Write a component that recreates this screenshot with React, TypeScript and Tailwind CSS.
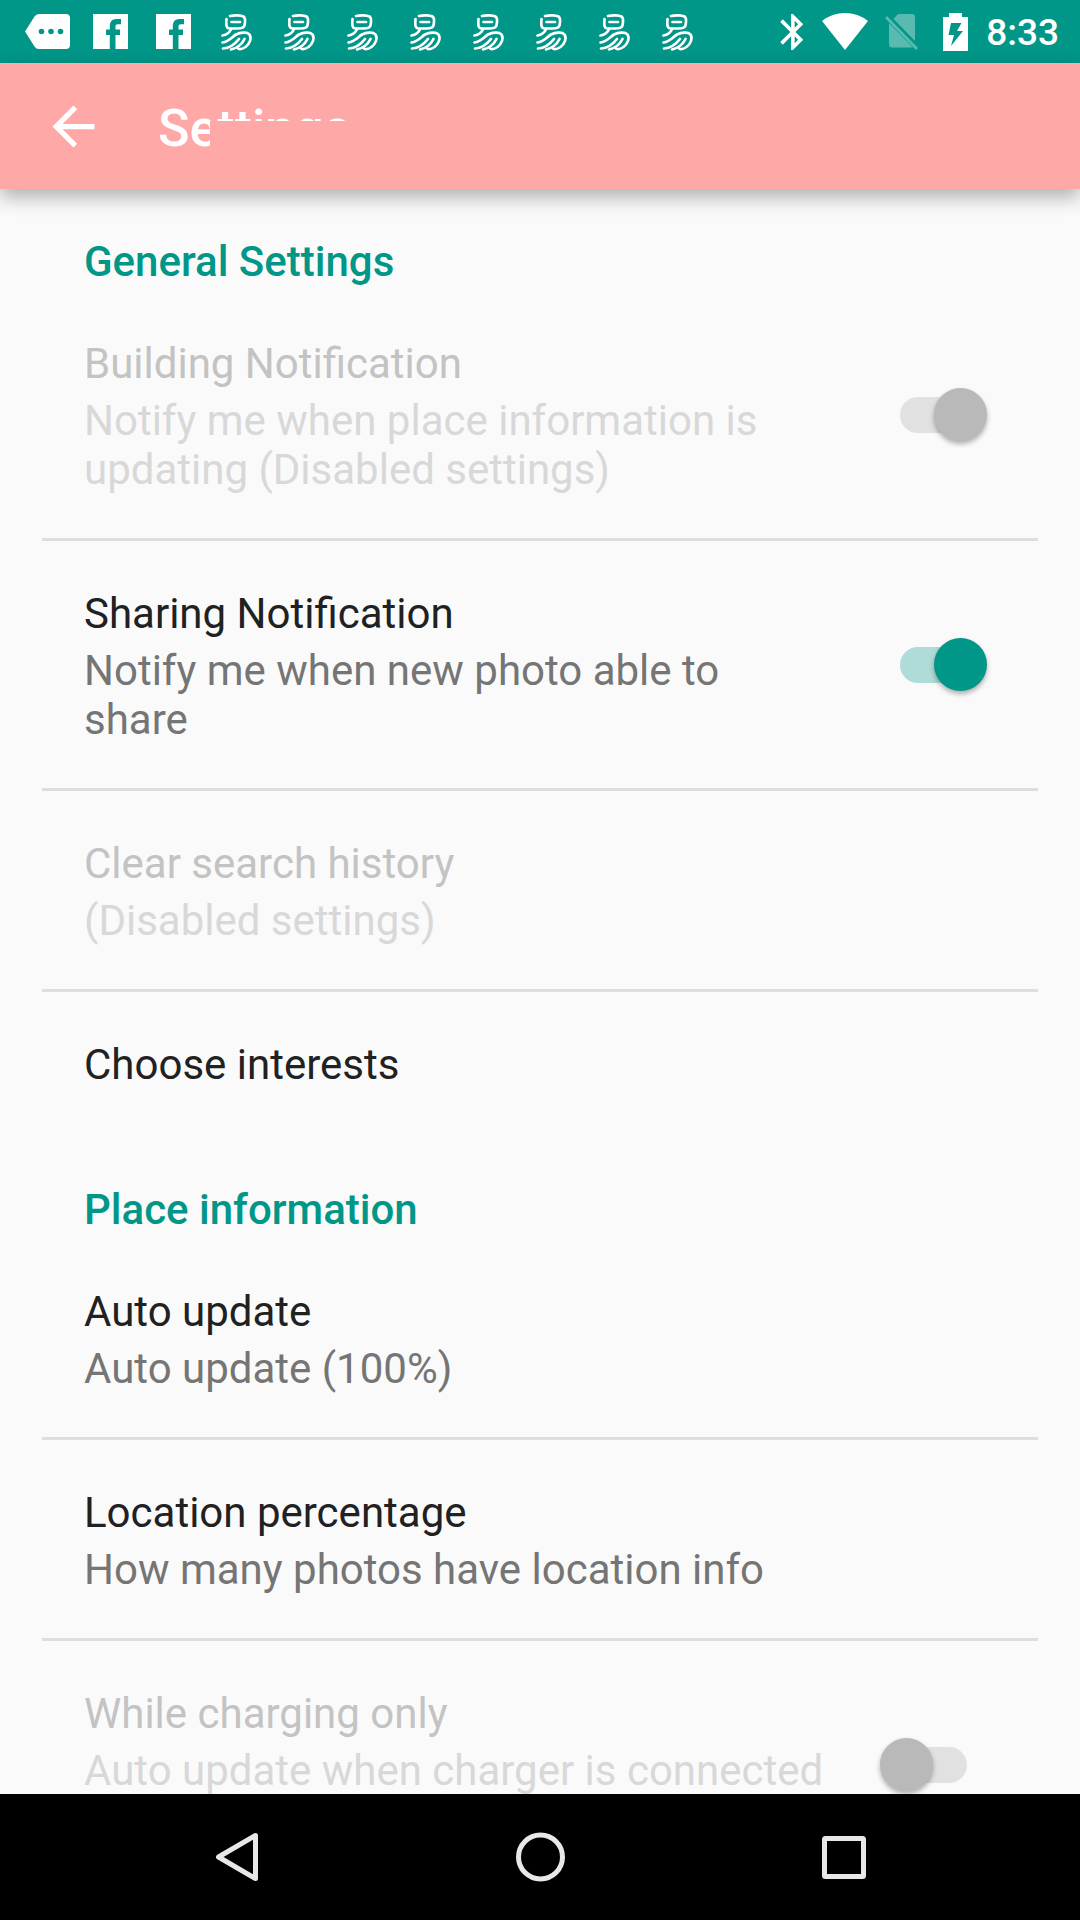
import React, { useState } from "react";

function MessageIcon() {
  return (
    <svg width="46" height="36" viewBox="0 0 46 36" aria-hidden="true">
      <path fill="#fff" d="M14 0H41Q45 0 45 4V31Q45 35 41 35H14Q11 35 9.500 32.500L0 17.500L9.500 2.500Q11 0 14 0Z" />
      <circle cx="16.500" cy="17.500" r="2.800" fill="#009688" />
      <circle cx="26" cy="17.500" r="2.800" fill="#009688" />
      <circle cx="35.500" cy="17.500" r="2.800" fill="#009688" />
    </svg>
  );
}

function FacebookIcon() {
  return (
    <svg width="35" height="36" viewBox="0 0 35 36" aria-hidden="true">
      <path
        fill="#fff"
        d="M0 0H35V35H22.500V21H27V15.500H22.500V12.500C22.500 11 23.200 10.300 24.800 10.300H28V5H23.500C19 5 16.800 7.800 16.800 12V15.500H13V21H16.800V35H0Z"
      />
    </svg>
  );
}

function SwirlIcon() {
  return (
    <svg width="35" height="40" viewBox="0 0 35 40" fill="none" stroke="#fff" strokeWidth="2.700" strokeLinecap="round" strokeLinejoin="round" aria-hidden="true">
      <path d="M11 4C15 3 22 3 24.500 4.500C27 6 26 11 25.500 13.500C25 16 23 16.500 18 16.500H11C7 16.500 7 13 7.500 7" />
      <path d="M12.500 10H21" />
      <path d="M12 17C11 20 7.500 23 3.500 23.500" />
      <path d="M3.500 30.500C10 29.500 13 25 17 22.500C21 20.500 28 19.500 30.500 22.500C33 26.500 30.500 32 26.500 35C23.500 37 20.500 37.500 19 36.500" />
      <path d="M4 36.500C11 36 16.500 31.500 20 27" />
      <path d="M12 37.500C18.500 36 23 32 25.500 27" />
    </svg>
  );
}

function BluetoothIcon() {
  return (
    <svg width="24" height="38" viewBox="5 1.500 13 21" aria-hidden="true">
      <path
        fill="#fff"
        d="M17.710 7.710L12 2h-1v7.590L6.410 5 5 6.410 10.590 12 5 17.590 6.410 19 11 14.410V22h1l5.710-5.710-4.300-4.290 4.300-4.290zM13 5.830l1.880 1.880L13 9.590V5.830zm1.880 10.460L13 18.170v-3.760l1.880 1.880z"
      />
    </svg>
  );
}

function WifiIcon() {
  return (
    <svg width="46" height="37" viewBox="0 0 46 37" aria-hidden="true">
      <path fill="#fff" d="M23 37L0 8Q10 0 23 0T46 8Z" />
    </svg>
  );
}

function NoSimIcon() {
  return (
    <svg width="34" height="36" viewBox="0 0 34 36" fill="#fff" fillOpacity="0.350" aria-hidden="true">
      <path d="M13 0H27Q30 0 30 3V27L8.500 5Z" />
      <path d="M4 9L28 33.500H7Q4 33.500 4 30Z" />
      <path d="M2 2L33 34L31 36L0 4Z" />
    </svg>
  );
}

function BatteryIcon() {
  return (
    <svg width="25" height="38" viewBox="0 0 25 38" aria-hidden="true">
      <path fill="#fff" fillRule="evenodd" d="M6 0H19V4H25V38H0V4H6ZM8 10L5.500 22H11L8 33L20 18H14L18.500 10Z" />
    </svg>
  );
}

function StatusBar() {
  return (
    <div className="flex h-[63px] shrink-0 items-center justify-between bg-[#009688] pl-[25px] pr-[21px]">
      <div className="flex items-center">
        <MessageIcon />
        <div className="ml-[22px] flex items-center gap-7">
          <FacebookIcon />
          <FacebookIcon />
          {Array.from({ length: 8 }, (_, i) => (
            <SwirlIcon key={i} />
          ))}
        </div>
      </div>
      <div className="flex items-center">
        <BluetoothIcon />
        <span className="ml-[18px] flex"><WifiIcon /></span>
        <span className="ml-[17px] flex"><NoSimIcon /></span>
        <span className="ml-6 flex"><BatteryIcon /></span>
        <span className="ml-[18px] pt-[2px] text-[37px] leading-[48px] font-medium text-white">8:33</span>
      </div>
    </div>
  );
}

function AppBar() {
  return (
    <header className="relative z-10 flex h-[126px] shrink-0 items-center bg-[#ffa8a8] pl-[42px] shadow-[0_8px_18px_rgba(0,0,0,0.3)]">
      <button type="button" aria-label="Back" className="flex">
        <svg width="63" height="63" viewBox="0 0 24 24" aria-hidden="true">
          <path fill="#fff" d="M20 11H7.830l5.590-5.590L12 4l-8 8 8 8 1.410-1.410L7.830 13H20v-2z" />
        </svg>
      </button>
      <h1 className="relative ml-[53px] pt-[6px] text-[52px] leading-[64px] font-medium text-white">
        Settings
        <span className="absolute -right-4 bottom-0 left-[52px] h-10 bg-[#ffa8a8]" />
      </h1>
    </header>
  );
}

interface ToggleProps {
  id: string;
  initial: boolean;
  disabled?: boolean;
}

function Toggle({ id, initial, disabled }: ToggleProps) {
  const [on, setOn] = useState(initial);
  const track = disabled ? "bg-[#e1e1e1]" : on ? "bg-[#b0dcd8]" : "bg-[#b9b9b9]";
  const thumb = disabled ? "bg-[#b9b9b9]" : on ? "bg-[#009688]" : "bg-[#f1f1f1]";
  return (
    <span className="relative flex h-[53px] w-[107px] shrink-0 items-center px-5">
      <span className={`h-9 flex-1 rounded-full ${track}`} />
      <span className={`absolute top-0 size-[53px] rounded-full shadow-[0_3px_5px_rgba(0,0,0,0.3)] ${thumb} ${on ? "right-0" : "left-0"}`} />
      <input
        id={id}
        type="checkbox"
        role="switch"
        checked={on}
        disabled={disabled}
        onChange={(e) => setOn(e.target.checked)}
        className="absolute inset-0 size-full opacity-0"
      />
    </span>
  );
}

interface Item {
  id: string;
  title: string;
  summary?: string;
  disabled?: boolean;
  toggle?: boolean;
}

function Row({ item }: { item: Item }) {
  const { id, title, summary, disabled, toggle } = item;
  const body = (
    <>
      <span className={`block leading-[48px] ${disabled ? "text-[#c3c3c3]" : "text-[#212121]"}`}>{title}</span>
      {summary && (
        <span className={`mt-2 block leading-[49px] ${disabled ? "text-[#d8d8d8]" : "text-[#757575]"}`}>{summary}</span>
      )}
    </>
  );
  if (toggle !== undefined) {
    return (
      <div className="flex min-h-[247px] items-center pr-[51px] pl-[42px]">
        <label htmlFor={id} className="flex-1 self-start pt-[49px] pb-11">
          {body}
        </label>
        <span className="ml-[52px] flex">
          <Toggle id={id} initial={toggle} disabled={disabled} />
        </span>
      </div>
    );
  }
  return (
    <button
      type="button"
      disabled={disabled}
      className={`block w-full px-[42px] pt-[49px] text-left ${summary ? "pb-11" : "pb-12"}`}
    >
      {body}
    </button>
  );
}

const sections: { name: string; items: Item[] }[] = [
  {
    name: "General Settings",
    items: [
      {
        id: "building",
        title: "Building Notification",
        summary: "Notify me when place information is updating (Disabled settings)",
        disabled: true,
        toggle: true,
      },
      { id: "sharing", title: "Sharing Notification", summary: "Notify me when new photo able to share", toggle: true },
      { id: "clear", title: "Clear search history", summary: "(Disabled settings)", disabled: true },
      { id: "interests", title: "Choose interests" },
    ],
  },
  {
    name: "Place information",
    items: [
      { id: "auto", title: "Auto update", summary: "Auto update (100%)" },
      { id: "location", title: "Location percentage", summary: "How many photos have location info" },
      {
        id: "charging",
        title: "While charging only",
        summary: "Auto update when charger is connected",
        disabled: true,
        toggle: false,
      },
    ],
  },
];

function NavBar() {
  return (
    <nav className="flex h-[126px] shrink-0 items-center bg-black px-[85px]">
      <button type="button" aria-label="Back" className="flex flex-1 justify-center">
        <svg width="52" height="52" viewBox="0 0 52 52" fill="none" stroke="#e8e8e8" strokeWidth="5" strokeLinejoin="round" aria-hidden="true">
          <path d="M44.500 4.500V47.500L7.500 26Z" />
        </svg>
      </button>
      <button type="button" aria-label="Home" className="flex flex-1 justify-center">
        <svg width="52" height="52" viewBox="0 0 52 52" fill="none" stroke="#e8e8e8" strokeWidth="5" aria-hidden="true">
          <circle cx="26.500" cy="26" r="22" />
        </svg>
      </button>
      <button type="button" aria-label="Recent apps" className="flex flex-1 justify-center">
        <svg width="52" height="52" viewBox="0 0 52 52" fill="none" stroke="#e8e8e8" strokeWidth="5" aria-hidden="true">
          <rect x="7.500" y="7.500" width="39" height="38" rx="1" />
        </svg>
      </button>
    </nav>
  );
}

export default function App() {
  return (
    <div className="flex h-screen flex-col overflow-hidden bg-[#fafafa] font-[Roboto,sans-serif] text-[42px]">
      <StatusBar />
      <AppBar />
      <main className="min-h-0 flex-1 overflow-hidden px-[42px]">
        {sections.map((s) => (
          <section key={s.name}>
            <h2 className="px-[42px] pt-[49px] pb-[5px] leading-[48px] font-medium text-[#009688]">{s.name}</h2>
            <div className="divide-y-[3px] divide-[#dedede]">
              {s.items.map((item) => (
                <Row key={item.id} item={item} />
              ))}
            </div>
          </section>
        ))}
      </main>
      <NavBar />
    </div>
  );
}
